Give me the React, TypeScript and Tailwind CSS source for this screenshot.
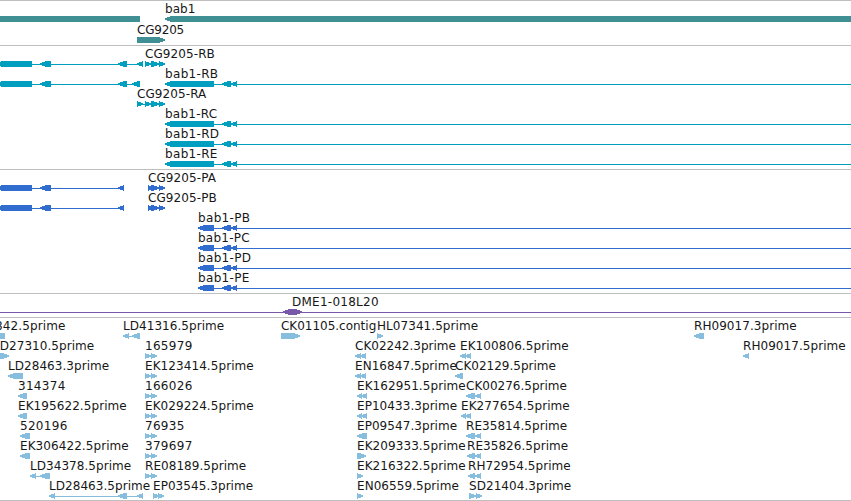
type Dir = 'left' | 'right' | 'both' | 'none'
type Exon = [start: number, end: number, dir: Dir]

interface Feature {
  label?: string
  // label offset, when it differs from the start of the feature
  labelX?: number
  start: number
  end: number
  exons: Exon[]
}

interface Track {
  name: string
  className: string
  rowClassName?: string
  rows: Feature[][]
}

const VIEW_WIDTH = 851

// builds a feature whose connector spans all of its exons
const feature = (label: string | undefined, exons: Exon[], labelX?: number): Feature => ({
  label,
  labelX,
  start: exons[0][0],
  end: exons[exons.length - 1][1],
  exons,
})

const bab1Transcript = (label: string): Feature => ({
  label,
  start: 165,
  end: VIEW_WIDTH,
  exons: [
    [165, 214, 'left'],
    [222, 231, 'left'],
    [231, 237, 'left'],
  ],
})

const bab1Protein = (label: string): Feature => ({
  label,
  start: 198,
  end: VIEW_WIDTH,
  exons: [
    [198, 214, 'left'],
    [222, 231, 'left'],
    [231, 237, 'left'],
  ],
})

const upstream = (...last: Exon[]): Feature =>
  feature(undefined, [[-4, 32, 'left'], [40, 51, 'left'], ...last])

const cg9205Protein = (label: string): Feature =>
  feature(label, [
    [148, 153, 'right'],
    [151, 159, 'right'],
    [159, 165, 'right'],
  ])

const est145 = (label: string): Feature =>
  feature(label, [
    [145, 151, 'right'],
    [151, 157, 'right'],
  ])

const tracks: Track[] = [
  {
    name: 'genes',
    className: 'pb-0.5 text-[#408f94]',
    rowClassName: 'gap-px',
    rows: [
      [feature(undefined, [[0, 140, 'none']]), feature('bab1', [[165, VIEW_WIDTH + 6, 'left']])],
      [feature('CG9205', [[137, 165, 'right']])],
    ],
  },
  {
    name: 'transcripts',
    className: 'pb-0.5 text-[#009fbf]',
    rows: [
      [
        upstream([118, 127, 'left'], [137, 143, 'left']),
        feature('CG9205-RB', [[145, 151, 'right'], [151, 159, 'right'], [159, 165, 'right']]),
      ],
      [upstream([118, 127, 'left'], [132, 140, 'left']), bab1Transcript('bab1-RB')],
      [
        feature('CG9205-RA', [
          [137, 143, 'right'],
          [145, 151, 'right'],
          [151, 159, 'right'],
          [159, 165, 'right'],
        ]),
      ],
      [bab1Transcript('bab1-RC')],
      [bab1Transcript('bab1-RD')],
      [bab1Transcript('bab1-RE')],
    ],
  },
  {
    name: 'proteins',
    className: 'pb-0.5 text-[#306dcf]',
    rows: [
      [upstream([118, 124, 'left']), cg9205Protein('CG9205-PA')],
      [upstream([118, 124, 'left']), cg9205Protein('CG9205-PB')],
      [bab1Protein('bab1-PB')],
      [bab1Protein('bab1-PC')],
      [bab1Protein('bab1-PD')],
      [bab1Protein('bab1-PE')],
    ],
  },
  {
    name: 'assembly',
    className: 'pb-0.5 text-[#7858a8]',
    rows: [
      [{ label: 'DME1-018L20', labelX: 292, start: 0, end: VIEW_WIDTH, exons: [[283, 302, 'both']] }],
    ],
  },
  {
    name: 'ests',
    className: 'border-b pb-px text-[#87bddd]',
    rows: [
      [
        feature('842.5prime', [[0, 5, 'none']], -5),
        feature('LD41316.5prime', [[123, 129, 'left'], [132, 140, 'left']]),
        feature('CK01105.contig', [[281, 300, 'right']]),
        feature('HL07341.5prime', [[377, 383, 'right']]),
        feature('RH09017.3prime', [[694, 704, 'left']]),
      ],
      [
        feature('LD27310.5prime', [[0, 9, 'right']], -7),
        est145('165979'),
        feature('CK02242.3prime', [[355, 361, 'left'], [360, 366, 'left']]),
        feature('EK100806.5prime', [[460, 466, 'left'], [465, 471, 'left']]),
        feature('RH09017.5prime', [[743, 749, 'left']]),
      ],
      [
        feature('LD28463.3prime', [[8, 23, 'left']]),
        est145('EK123414.5prime'),
        feature('EN16847.5prime', [[355, 361, 'left'], [360, 366, 'left']]),
        feature('CK02129.5prime', [[455, 463, 'left']]),
      ],
      [
        feature('314374', [[18, 27, 'left']]),
        est145('166026'),
        feature('EK162951.5prime', [[357, 362, 'left'], [361, 367, 'left']]),
        feature('CK00276.5prime', [[466, 475, 'left'], [475, 481, 'left']]),
      ],
      [
        feature('EK195622.5prime', [[18, 27, 'left']]),
        est145('EK029224.5prime'),
        feature('EP10433.3prime', [[357, 362, 'left'], [361, 367, 'left']]),
        feature('EK277654.5prime', [[461, 466, 'left'], [465, 471, 'left']]),
      ],
      [
        feature('520196', [[20, 30, 'left']]),
        est145('76935'),
        feature('EP09547.3prime', [[357, 367, 'left']]),
        feature('RE35814.5prime', [[466, 475, 'left'], [475, 481, 'left']]),
      ],
      [
        feature('EK306422.5prime', [[20, 30, 'left']]),
        est145('379697'),
        feature('EK209333.5prime', [[357, 366, 'right']]),
        feature('RE35826.5prime', [[467, 475, 'left'], [475, 481, 'left']]),
      ],
      [
        feature('LD34378.5prime', [[30, 36, 'left'], [40, 50, 'left']]),
        est145('RE08189.5prime'),
        feature('EK216322.5prime', [[357, 363, 'right']]),
        feature('RH72954.5prime', [[468, 475, 'left'], [475, 481, 'left']]),
      ],
      [
        feature('LD28463.5prime', [[49, 55, 'left'], [118, 127, 'left'], [137, 143, 'left']]),
        feature('EP03545.3prime', [[153, 159, 'right'], [158, 164, 'right']]),
        feature('EN06559.5prime', [[357, 363, 'right']]),
        feature('SD21404.3prime', [[469, 476, 'right'], [476, 482, 'right']]),
      ],
    ],
  },
]

// the tip of an arrow head is slightly blunt so that it stays visible at 6px
function exonPoints([start, end, dir]: Exon) {
  const head = Math.min(6, end - start)
  const toLeft = dir === 'left' || dir === 'both'
  const toRight = dir === 'right' || dir === 'both'
  const left = toLeft ? start + head : start
  const right = toRight ? end - head : end
  return [
    [start, toLeft ? 2.2 : 0],
    [left, 0],
    [right, 0],
    [end, toRight ? 2.2 : 0],
    [end, toRight ? 3.8 : 6],
    [right, 6],
    [left, 6],
    [start, toLeft ? 3.8 : 6],
  ].join(' ')
}

// wide digits and hyphens, narrow capitals, evened out over the whole label
function tracking(label: string) {
  let extra = 0
  for (const char of label) {
    if (/\d/.test(char)) extra += 0.3
    else if (char === '-') extra += 3
    else if (/[CG]/.test(char)) extra -= 1.2
    else if (/[A-Z]/.test(char)) extra -= 0.5
  }
  return extra / label.length
}

function Row({ features }: { features: Feature[] }) {
  return (
    <div className="flex h-5 flex-col">
      <div className="relative h-3.5">
        {features.map(
          (f) =>
            f.label && (
              <span
                key={f.label}
                className="absolute top-0 whitespace-nowrap text-xs/[14px] text-neutral-900"
                style={{ left: f.labelX ?? f.start, letterSpacing: tracking(f.label) }}
              >
                {f.label}
              </span>
            ),
        )}
      </div>
      <svg width={VIEW_WIDTH} height={6} className="block fill-current" shapeRendering="crispEdges">
        {features.map((f, i) => (
          <g key={i}>
            <rect x={f.start} y={3} width={f.end - f.start} height={1} />
            {f.exons.map((exon, j) => (
              <polygon key={j} points={exonPoints(exon)} />
            ))}
          </g>
        ))}
      </svg>
    </div>
  )
}

export default function App() {
  return (
    <main className="flex h-[501px] w-[851px] flex-col overflow-hidden bg-white font-['DejaVu_Sans',sans-serif]">
      {tracks.map((track) => (
        <section key={track.name} className={`border-t border-t-[#bfbfbf] border-b-[#bfbfbf] pt-px ${track.className}`}>
          <div className={`flex flex-col ${track.rowClassName ?? ''}`}>
            {track.rows.map((row, i) => (
              <Row key={i} features={row} />
            ))}
          </div>
        </section>
      ))}
    </main>
  )
}
